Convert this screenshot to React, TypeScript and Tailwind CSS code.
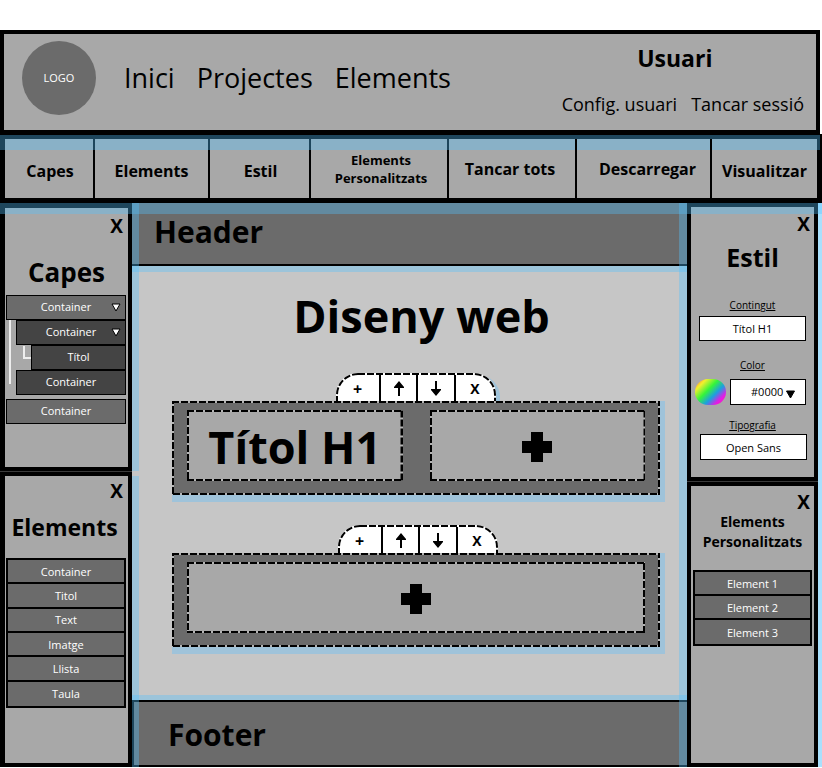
import React from "react";

const tint = "pointer-events-none absolute bg-[rgba(83,194,255,0.36)]";

type Tool = { label: string; className?: string };

const tools: Tool[] = [
  { label: "Capes", className: "border-r-2 pl-0.5 text-base" },
  { label: "Elements", className: "border-r-2 text-base" },
  { label: "Estil", className: "border-r-2 pl-0.5 text-base" },
  { label: "Elements Personalitzats", className: "border-r-2 pl-5 pr-4 pb-1 text-[13px] leading-[18px]" },
  { label: "Tancar tots", className: "relative border-r-2 pb-1 pr-1 text-base" },
  { label: "Descarregar", className: "relative border-r-2 pb-1 pl-2 text-base" },
  { label: "Visualitzar", className: "relative text-base" },
];

function DashedOutline({ radius = 0, open = false }: { radius?: number; open?: boolean }) {
  const height = open ? "200%" : "100%";
  return (
    <svg className="pointer-events-none absolute inset-0 size-full" aria-hidden="true">
      <rect width="100%" height={height} rx={radius} fill="none" stroke={open ? "#ffffff" : "#b4b4b4"} strokeWidth="4" />
      <rect width="100%" height={height} rx={radius} fill="none" stroke="#000000" strokeWidth="4" strokeDasharray="7 2" />
    </svg>
  );
}

function Arrow({ down = false }: { down?: boolean }) {
  return (
    <svg viewBox="0 0 10 15" className={down ? "h-[15px] w-[10px] rotate-180" : "h-[15px] w-[10px]"} aria-hidden="true">
      <path d="M5 0 L10 6 V7 H6 V15 H4 V7 H0 V6 Z" fill="#000" />
    </svg>
  );
}

function Triangle({ className, fill }: { className: string; fill: string }) {
  return (
    <svg viewBox="0 0 10 9" className={className} aria-hidden="true">
      <path d="M1 1 H9 L5 8 Z" fill={fill} stroke="#000" strokeWidth="1" />
    </svg>
  );
}

function Plus() {
  return (
    <svg viewBox="0 0 30 30" className="size-[30px]" aria-hidden="true">
      <path d="M9 0 H21 V9 H30 V21 H21 V30 H9 V21 H0 V9 H9 Z" fill="#000" />
    </svg>
  );
}

function CloseButton({ className }: { className: string }) {
  return (
    <button type="button" className={`self-end text-[19px] leading-[20px] font-bold ${className}`}>
      X
    </button>
  );
}

function Block({ selected = false, children }: { selected?: boolean; children: React.ReactNode }) {
  return (
    <section className="ml-10 mr-[27px]">
      <div className="flex justify-center">
        <div className={selected ? "rounded-t-[22px] shadow-[4px_2px_0_0_#9fc3da]" : "ml-1 rounded-t-[22px]"}>
          <div className="relative grid h-7 grid-cols-[45px_37px_38px_40px] overflow-hidden rounded-t-[22px] bg-white font-bold">
            <button type="button" aria-label="Afegir" className="border-r-2 border-black pt-1 text-base leading-6">+</button>
            <button type="button" aria-label="Pujar" className="flex items-center justify-center border-r-2 border-black pt-0.5"><Arrow /></button>
            <button type="button" aria-label="Baixar" className="flex items-center justify-center border-r-2 border-black pt-0.5"><Arrow down /></button>
            <button type="button" aria-label="Eliminar" className="pt-1 pr-0.5 text-[14px] leading-6">X</button>
            <DashedOutline radius={22} open />
          </div>
        </div>
      </div>
      <div className="relative flex gap-[27px] bg-[#6b6b6b] px-[15px] pt-[9px] pb-[14px] shadow-[5px_7px_0_0_#9fc3da,0_7px_0_0_#9fc3da,5px_0_0_0_#9fc3da]">
        {children}
        <DashedOutline />
      </div>
    </section>
  );
}

function Slot({ children }: { children: React.ReactNode }) {
  return (
    <div className="relative flex h-[71px] flex-1 items-center justify-center bg-[#a8a8a8] pt-0.5">
      {children}
      <DashedOutline />
    </div>
  );
}

function Palette({ items, className }: { items: string[]; className: string }) {
  return (
    <ul className={`grid auto-rows-fr divide-y-2 divide-black border-2 border-black bg-[#6b6b6b] text-[11px] text-white ${className}`}>
      {items.map((item) => (
        <li key={item} className="flex">
          <button type="button" className="flex-1 pt-px leading-[20px]">{item}</button>
        </li>
      ))}
    </ul>
  );
}

const layer = "flex h-[25px] w-full items-center justify-center border border-black text-[11px] text-white";

export default function App() {
  return (
    <div lang="ca" className="flex min-h-screen flex-col bg-white pt-[30px] pb-px font-['Open_Sans','Noto_Sans',sans-serif] text-black">
      <header className="mr-0.5 flex h-[104px] items-start justify-between border-4 border-black bg-[#a8a8a8]">
        <div className="mt-[7px] ml-[18px] flex h-[74px] items-center">
          <div className="flex size-[74px] items-center justify-center rounded-full bg-[#6b6b6b] text-[11px] text-white">LOGO</div>
          <nav className="ml-7 flex gap-[22px] text-[27px] leading-[36px]">
            <a href="#inici">Inici</a>
            <a href="#projectes">Projectes</a>
            <a href="#elements">Elements</a>
          </nav>
        </div>
        <div className="mt-2 mr-3">
          <h2 className="pr-4 text-center text-[23px] leading-[32px] font-bold">Usuari</h2>
          <div className="mt-[18px] flex gap-3.5 text-[18px] leading-[24px]">
            <a href="#config">Config. usuari</a>
            <a href="#sortir">Tancar sessió</a>
          </div>
        </div>
      </header>

      <nav className="relative grid h-[69px] grid-cols-[90fr_115fr_101fr_138fr_128fr_135fr_105fr] border-[5px] border-black bg-[#a8a8a8]">
        <div className="contents">
          {tools.slice(0, 4).map((t) => (
            <button key={t.label} type="button" className={`border-black pt-1 font-bold ${t.className}`}>{t.label}</button>
          ))}
        </div>
        <div className={`${tint} -top-1 -left-[5px] -right-[3px] h-[15px]`} />
        {tools.slice(4).map((t) => (
          <button key={t.label} type="button" className={`border-black pt-1 font-bold ${t.className}`}>{t.label}</button>
        ))}
      </nav>

      <div className="relative flex flex-1">
        <aside className="flex w-[132px] shrink-0 flex-col gap-px bg-[#3a3a3a]">
          <section className="flex h-[268px] flex-col border-t-[5px] border-r-4 border-b-4 border-l-[5px] border-black bg-[#a8a8a8]">
            <CloseButton className="mt-2 mr-[5px]" />
            <h2 className="mt-5 text-center text-[26px] leading-[32px] font-bold">Capes</h2>
            <ul className="relative mt-[7px] mr-0.5 ml-px">
              <li>
                <button type="button" className={`${layer} relative bg-[#6b6b6b]`}>
                  Container
                  <Triangle fill="#fff" className="absolute right-1 h-[9px] w-[10px]" />
                </button>
                <ul className="pl-2.5">
                  <li>
                    <button type="button" className={`${layer} relative bg-[#444444]`}>
                      Container
                      <Triangle fill="#fff" className="absolute right-1 h-[9px] w-[10px]" />
                    </button>
                    <ul className="pl-[15px]">
                      <li><button type="button" className={`${layer} bg-[#444444]`}>Títol</button></li>
                    </ul>
                  </li>
                  <li><button type="button" className={`${layer} bg-[#444444]`}>Container</button></li>
                </ul>
              </li>
              <li className="mt-1"><button type="button" className={`${layer} bg-[#6b6b6b]`}>Container</button></li>
              <li aria-hidden="true" className="absolute top-[25px] left-[3px] h-16 w-0.5 bg-[#eeeeee]" />
              <li aria-hidden="true" className="absolute top-[51px] left-[17px] h-[13px] w-2 border-b-2 border-l-2 border-[#eeeeee]" />
            </ul>
          </section>
          <section className="flex flex-1 flex-col border-y-4 border-r-4 border-l-[5px] border-black bg-[#a8a8a8]">
            <CloseButton className="mt-[5px] mr-[5px]" />
            <h2 className="mt-2.5 pr-1 text-center text-[23px] leading-[32px] font-bold">Elements</h2>
            <Palette className="mt-[15px] mr-0.5 ml-px h-[150px]" items={["Container", "Titol", "Text", "Imatge", "Llista", "Taula"]} />
          </section>
        </aside>

        <main className="relative flex min-w-0 flex-1 flex-col bg-[#c6c6c6]">
          <div className="flex h-[63px] items-center border-b-2 border-black bg-[#6b6b6b] pb-1 pl-[22px] text-[30px] leading-[40px] font-bold">Header</div>
          <div className="relative flex flex-1 flex-col">
            <h1 className="mt-5 pl-6 text-center text-[45px] leading-[60px] font-bold">Diseny web</h1>
            <div className="mt-[27px] flex flex-col gap-[30px]">
              <Block selected>
                <Slot><h1 className="text-[45px] leading-[60px] font-bold">Títol H1</h1></Slot>
                <Slot><button type="button" aria-label="Afegir element"><Plus /></button></Slot>
              </Block>
              <Block>
                <Slot><button type="button" aria-label="Afegir element"><Plus /></button></Slot>
              </Block>
            </div>
            <div className={`${tint} inset-x-0 top-0 h-1.5`} />
            <div className={`${tint} inset-x-0 bottom-0 h-[5px]`} />
          </div>
          <footer className="flex h-[67px] items-center border-y-2 border-l-2 border-black bg-[#6b6b6b] pt-0.5 pl-[34px] text-[30px] leading-[40px] font-bold">Footer</footer>
          <div className={`${tint} top-0 left-0 h-[268px] w-[7px]`} />
          <div className={`${tint} top-[273px] bottom-0 left-0 w-[7px]`} />
          <div className={`${tint} inset-y-0 right-0 w-2`} />
        </main>

        <aside className="flex w-[131px] shrink-0 flex-col gap-px bg-[#3a3a3a]">
          <section className="flex h-[278px] flex-col border-4 border-black bg-[#a8a8a8] text-[11px]">
            <CloseButton className="mt-[7px] mr-1" />
            <h2 className="mt-[7px] text-center text-[25px] leading-[32px] font-bold">Estil</h2>
            <label htmlFor="contingut" className="mt-6 text-center text-[10px] leading-[16px] underline">Contingut</label>
            <input id="contingut" defaultValue="Títol H1" className="mx-2 mt-[3px] h-[25px] min-w-0 border border-black bg-white text-center" />
            <label htmlFor="color" className="mt-4 text-center text-[10px] leading-[16px] underline">Color</label>
            <div className="mt-1.5 mr-2 ml-1 flex h-[26px] gap-1">
              <div className="w-[31px] shrink-0 rounded-[13px] bg-[linear-gradient(135deg,#ff7a3d_5%,#f3f02c_20%,#35f53a_42%,#1c9fe0_62%,#e619e6_80%,#ff2a9a_100%)]" />
              <div className="relative flex min-w-0 flex-1">
                <select id="color" className="w-full appearance-none border border-black bg-white pl-5">
                  <option>#0000</option>
                </select>
                <Triangle fill="#000" className="pointer-events-none absolute top-[11px] right-2.5 h-[9px] w-[11px]" />
              </div>
            </div>
            <label htmlFor="tipografia" className="mt-3 text-center text-[10px] leading-[16px] underline">Tipografia</label>
            <input id="tipografia" defaultValue="Open Sans" className="mt-px mr-[7px] ml-[9px] h-[26px] min-w-0 border border-black bg-white text-center" />
          </section>
          <section className="flex flex-1 flex-col border-4 border-black bg-[#a8a8a8]">
            <CloseButton className="mt-1.5 mr-1" />
            <h2 className="text-center text-[14px] leading-[20px] font-bold">Elements Personalitzats</h2>
            <Palette className="mt-[18px] mr-0.5 ml-0.5 h-[76px]" items={["Element 1", "Element 2", "Element 3"]} />
          </section>
        </aside>
        <div className="w-1 shrink-0 bg-[#a9e0fd]" />
        <div className={`${tint} inset-x-0 top-0 h-[11px]`} />
      </div>
    </div>
  );
}
